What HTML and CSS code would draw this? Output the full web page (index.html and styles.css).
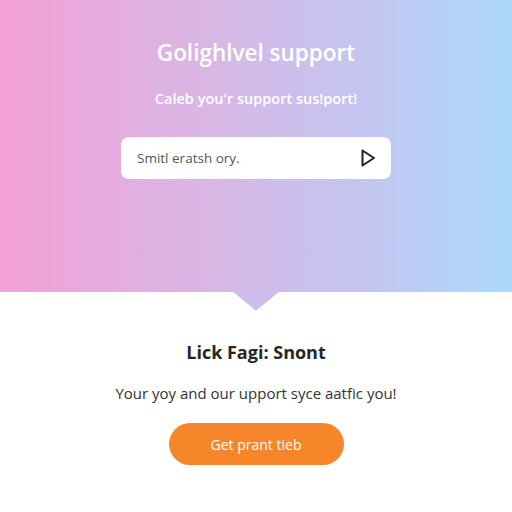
FILE: index.html
```html
<!DOCTYPE html>
<html>
<head>
	<meta charset="utf-8">
	<title>Golighlvel support</title>
	<link rel="stylesheet" href="styles.css">
</head>
<body>
	<div class="hero">
		<h1 class="title">Golighlvel support</h1>
		<p class="subtitle">Caleb you'r support sus!port!</p>
		<div class="search">
			<span class="placeholder">Smitl eratsh ory.</span>
			<svg class="play" width="18" height="20" viewBox="0 0 18 20">
				<path d="M3.5 2.5 L15 10 L3.5 17.5 Z" fill="none" stroke="#222" stroke-width="2" stroke-linejoin="round"/>
			</svg>
		</div>
		<div class="notch"></div>
	</div>
	<div class="info">
		<h2 class="heading">Lick Fagi: Snont</h2>
		<p class="text">Your yoy and our upport syce aatfic you!</p>
		<button class="cta">Get prant tieb</button>
	</div>
</body>
</html>
```

FILE: styles.css
```css
body{
	margin: 0;
	font-family: "Open Sans", "Noto Sans", sans-serif;
	background: #ffffff;
}
.hero{
	position: relative;
	height: 292px;
	background: linear-gradient(90deg, #f3a0d7 0%, #dcb4e2 35%, #c8c2ee 65%, #acd9fb 100%);
	display: flex;
	flex-direction: column;
	align-items: center;
}
.title{
	margin: 38px 0 0 0;
	font-size: 22.5px;
	font-weight: 600;
	color: #ffffff;
	line-height: 30px;
}
.subtitle{
	margin: 21px 0 0 0;
	font-size: 14.5px;
	font-weight: 600;
	color: #ffffff;
	line-height: 20px;
}
.search{
	margin-top: 28px;
	width: 270px;
	height: 42px;
	background: #ffffff;
	border-radius: 8px;
	display: flex;
	align-items: center;
	justify-content: space-between;
	padding: 0 14px 0 16px;
	box-sizing: border-box;
}
.placeholder{
	font-size: 13.5px;
	color: #555555;
}
.play{
	display: block;
}
.notch{
	position: absolute;
	left: 232px;
	bottom: -18px;
	width: 48px;
	height: 19px;
	background: #cfbcea;
	clip-path: polygon(0 0, 100% 0, 52% 100%, 48% 100%);
}
.info{
	display: flex;
	flex-direction: column;
	align-items: center;
}
.heading{
	margin: 48px 0 0 0;
	font-size: 18px;
	font-weight: 700;
	color: #262626;
	line-height: 24px;
}
.text{
	margin: 19px 0 0 0;
	font-size: 15px;
	color: #333333;
	line-height: 20px;
}
.cta{
	margin-top: 20px;
	width: 175px;
	height: 42px;
	border: 0;
	border-radius: 21px;
	background: #f7862a;
	color: #ffffff;
	font-family: "Open Sans", "Noto Sans", sans-serif;
	font-size: 14px;
}
```
